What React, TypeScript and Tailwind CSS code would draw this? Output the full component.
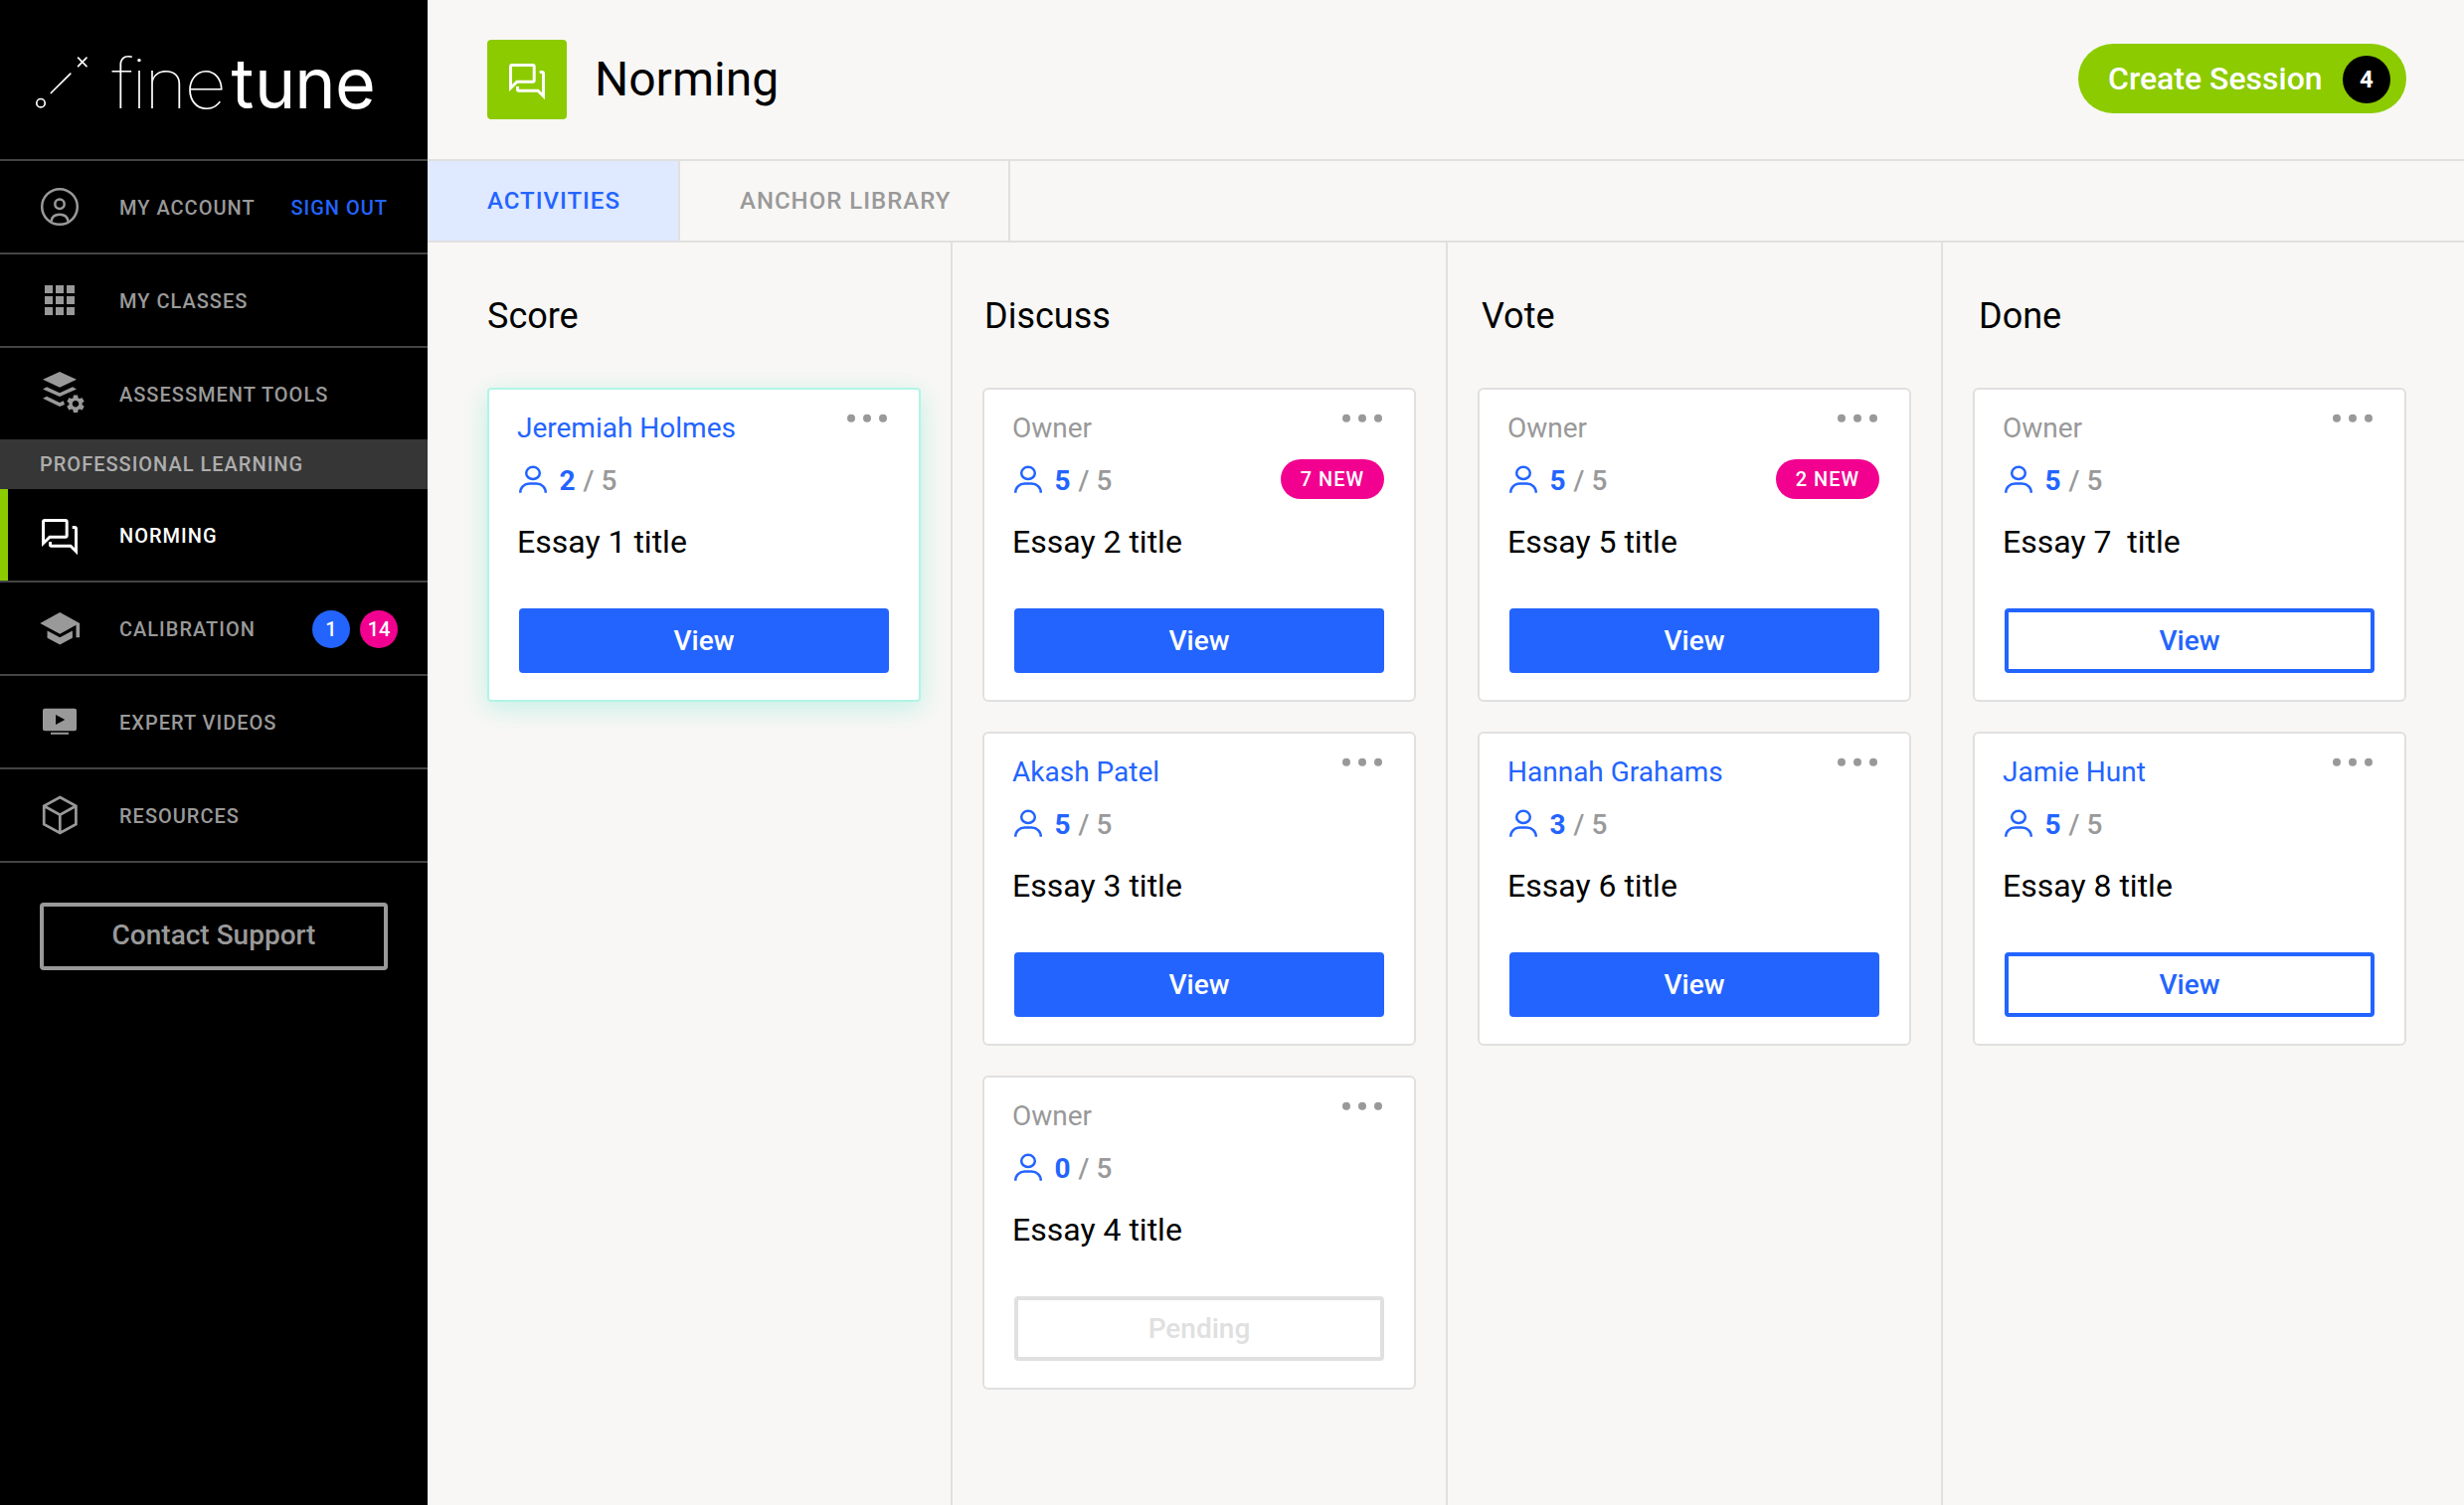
import type { ReactNode } from "react";

function ForumIcon({ className = "" }: { className?: string }) {
  return (
    <svg viewBox="0 0 36 36" fill="none" stroke="currentColor" strokeWidth={3} className={`size-9 shrink-0 overflow-visible ${className}`}>
      <path d="M1.5 24.5V3q0-1.5 1.5-1.5h20.7q1.5 0 1.5 1.5v13.7q0 1.5-1.5 1.5H8Z" />
      <path d="M8.5 23v3q0 1.2 1.2 1.2H29l5.5 5.5V10q0-1.5-1.5-1.5h-2.3" />
    </svg>
  );
}

function NavSvg({ children }: { children: ReactNode }) {
  return (
    <svg viewBox="0 0 40 40" fill="currentColor" className="size-10 shrink-0 overflow-visible">
      {children}
    </svg>
  );
}

const AccountIcon = () => (
  <NavSvg>
    <g fill="none" stroke="currentColor" strokeWidth={2.5}>
      <circle cx="20" cy="20" r="17.8" />
      <circle cx="20" cy="17.2" r="4.7" />
      <path d="M11.4 34.8c.6-4.6 3.900-7.100 8.600-7.100s8 2.500 8.600 7.100" />
    </g>
  </NavSvg>
);

const AppsIcon = () => (
  <NavSvg>
    {[5, 16, 27].map((y) => [5, 16, 27].map((x) => <rect key={`${x}-${y}`} x={x} y={y} width="8" height="8" />))}
  </NavSvg>
);

const ToolsIcon = () => (
  <NavSvg>
    <path d="M20-2 37 5.700 20 13.700 3 5.700Z" />
    <path d="M3 15.500 7 13.300 20 19.300 33 13.300 37 15.500 20 23Z" />
    <path d="M3 24.700 7 22.800 20 28.900 23.800 27.200 25 31 20 33Z" />
    <path
      transform="translate(25 19.300) scale(.917)"
      d="M19.140 12.940c.04-.3.060-.610.060-.940 0-.320-.020-.640-.070-.940l2.030-1.580c.180-.140.230-.410.120-.610l-1.920-3.320c-.120-.220-.370-.290-.590-.220l-2.390.960c-.5-.380-1.030-.7-1.620-.940l-.360-2.540c-.040-.240-.240-.410-.480-.410h-3.840c-.240 0-.430.170-.470.410l-.360 2.540c-.590.240-1.130.570-1.620.940l-2.390-.960c-.220-.080-.470 0-.590.220L2.740 8.870c-.120.210-.080.470.120.610l2.030 1.580c-.050.3-.090.630-.090.940s.020.640.070.940l-2.030 1.580c-.180.140-.230.410-.120.610l1.920 3.320c.120.220.370.290.590.220l2.390-.960c.5.380 1.030.7 1.620.940l.360 2.540c.050.240.240.410.480.410h3.840c.240 0 .440-.170.470-.410l.360-2.540c.590-.240 1.130-.560 1.620-.940l2.390.960c.220.080.470 0 .590-.220l1.920-3.320c.120-.220.070-.470-.120-.610l-2.010-1.580zM12 15.600c-1.980 0-3.600-1.620-3.600-3.600s1.620-3.600 3.600-3.600 3.600 1.620 3.600 3.600-1.620 3.600-3.600 3.600z"
    />
  </NavSvg>
);

const SchoolIcon = () => (
  <NavSvg>
    <path
      transform="translate(-1.500 -1.400) scale(1.810)"
      d="M5 13.180v4L12 21l7-3.820v-4L12 17l-7-3.820zM12 3L1 9l11 6 9-4.910V17h2V9L12 3z"
    />
  </NavSvg>
);

const VideoIcon = () => (
  <NavSvg>
    <path fillRule="evenodd" d="M5 6.700h30a2 2 0 0 1 2 2v18.600a2 2 0 0 1-2 2H5a2 2 0 0 1-2-2V8.700a2 2 0 0 1 2-2ZM16 13v10l9.300-5Z" />
    <rect x="11" y="30.800" width="18" height="2" />
  </NavSvg>
);

const CubeIcon = () => (
  <NavSvg>
    <path
      fill="none"
      stroke="currentColor"
      strokeWidth={2.700}
      d="M20.300 2 36.400 10.800V29.200L20.300 38 4.200 29.200V10.800ZM4.200 10.800 20.300 19.800 36.400 10.800M20.300 19.800V38"
    />
  </NavSvg>
);

function Logo() {
  return (
    <svg viewBox="0 0 430 160" className="block h-40 w-full text-white">
      <g fill="none" stroke="currentColor" strokeWidth={1.700}>
        <circle cx="41" cy="103.700" r="4.200" />
        <path strokeLinecap="round" d="M51.300 93.500 70.800 74.200M78.600 58.200l8.400 8.400M87 58.200l-8.400 8.400" />
      </g>
      <text y="109" fill="currentColor" transform="scale(1.060 1)" className="font-[Inter] text-[70px] font-thin" x="105.800 124.600 136.800 174.900">
        fine
      </text>
      <text y="109" fill="currentColor" className="font-[Inter] text-[70px] font-normal" x="232.400 256 296.200 337">
        tune
      </text>
    </svg>
  );
}

function NavRow({
  icon,
  label,
  children,
  active = false,
  divider = true,
}: {
  icon: ReactNode;
  label: string;
  children?: ReactNode;
  active?: boolean;
  divider?: boolean;
}) {
  return (
    <>
      <a className={`flex h-[92px] items-center ${active ? "border-l-8 border-[#8ccb00] pl-8 text-white" : "pl-10 text-[#999]"}`}>
        <span className="mr-10 flex w-10 justify-center">{icon}</span>
        <span className="pt-0.5 text-[20px] leading-6 font-medium tracking-[1px] whitespace-nowrap">{label}</span>
        {children}
      </a>
      {divider && <div className="h-0.5 bg-[#444]" />}
    </>
  );
}

function Sidebar() {
  return (
    <aside className="flex w-[430px] shrink-0 flex-col bg-black">
      <Logo />
      <div className="h-0.5 bg-[#444]" />
      <NavRow icon={<AccountIcon />} label="MY ACCOUNT">
        <span className="ml-auto pt-0.5 pr-10 text-[20px] leading-6 font-medium tracking-[1px] whitespace-nowrap text-[#2364ff]">SIGN OUT</span>
      </NavRow>
      <NavRow icon={<AppsIcon />} label="MY CLASSES" />
      <NavRow icon={<ToolsIcon />} label="ASSESSMENT TOOLS" divider={false} />
      <div className="flex h-[50px] items-center bg-[#363636] pl-10 text-[20px] leading-6 font-medium tracking-[1px] text-white/60">
        PROFESSIONAL LEARNING
      </div>
      <NavRow icon={<ForumIcon className="mt-1" />} label="NORMING" active />
      <NavRow icon={<SchoolIcon />} label="CALIBRATION">
        <span className="mt-0.5 ml-auto flex gap-2.5 pr-[30px] text-[20px] leading-6 font-medium text-white">
          <span className="flex size-[38px] items-center justify-center rounded-full bg-[#2364ff]">1</span>
          <span className="flex size-[38px] items-center justify-center rounded-full bg-[#f2008f]">14</span>
        </span>
      </NavRow>
      <NavRow icon={<VideoIcon />} label="EXPERT VIDEOS" />
      <NavRow icon={<CubeIcon />} label="RESOURCES" />
      <button className="mx-10 mt-10 flex h-[68px] items-center justify-center rounded border-4 border-[#999] pb-1 text-[28px] leading-[33px] font-medium text-[#999]">
        Contact Support
      </button>
    </aside>
  );
}

type Essay = {
  owner?: string;
  done: number;
  title: string;
  fresh?: number;
  action: "solid" | "outline" | "pending";
};

const BUTTON = {
  solid: "border-[#2364ff] bg-[#2364ff] text-white",
  outline: "border-[#2364ff] bg-white text-[#2364ff]",
  pending: "border-[#e0e0e0] bg-white text-[#e0e0e0]",
};

function Card({ essay, glow }: { essay: Essay; glow: boolean }) {
  return (
    <article
      className={`flex h-[316px] w-[436px] flex-col border-2 bg-white px-7 pt-[22px] ${
        glow ? "rounded border-[#b2f4e5] shadow-[0_6px_26px_rgba(8,215,173,0.22)]" : "rounded-md border-[#e0e0e0]"
      }`}
    >
      <div className="flex h-[33px] items-start justify-between">
        <span className={`text-[28px] leading-[33px] ${essay.owner ? "text-[#2364ff]" : "text-[#999]"}`}>{essay.owner ?? "Owner"}</span>
        <svg viewBox="0 0 40 9" className="mt-0.5 mr-1 h-[9px] w-10" fill="#999">
          <circle cx="4" cy="4.700" r="4" />
          <circle cx="20" cy="4.700" r="4" />
          <circle cx="36" cy="4.700" r="4" />
        </svg>
      </div>
      <div className="mt-[15px] flex h-10 items-start px-0.5">
        <svg viewBox="0 0 28 28" className="mt-1.5 size-7" fill="none" stroke="#2364ff" strokeWidth={2.500}>
          <ellipse cx="14" cy="7.900" rx="6.800" ry="6.100" />
          <path d="M1.250 27.700c0-5.300 4-9.200 9.300-9.200h6.900c5.300 0 9.300 3.900 9.300 9.200" />
        </svg>
        <span className="mt-[5px] ml-[12.5px] text-[28px] leading-[33px] font-medium whitespace-pre text-[#999]">
          <span className="mr-px font-bold text-[#2364ff]">{essay.done}</span>
          {" / 5"}
        </span>
        {essay.fresh && (
          <span className="ml-auto flex h-10 w-[104px] items-center justify-center rounded-full bg-[#f2008f] text-[20px] leading-6 font-medium tracking-[1px] text-white">
            {essay.fresh} NEW
          </span>
        )}
      </div>
      <h3 className="mt-6 text-[32px] leading-[38px] whitespace-pre text-black">{essay.title}</h3>
      <button
        className={`mx-0.5 mt-12 flex h-[65px] items-center justify-center rounded border-4 text-[28px] leading-[33px] font-medium ${BUTTON[essay.action]}`}
      >
        {essay.action === "pending" ? "Pending" : "View"}
      </button>
    </article>
  );
}

const COLUMNS: { name: string; box: string; heading: string; glow?: boolean; essays: Essay[] }[] = [
  {
    name: "Score",
    box: "w-[528px] pl-[60px] border-r-2",
    heading: "",
    glow: true,
    essays: [{ owner: "Jeremiah Holmes", done: 2, title: "Essay 1 title", action: "solid" }],
  },
  {
    name: "Discuss",
    box: "w-[498px] pl-[30px] border-r-2",
    heading: "pl-0.5",
    essays: [
      { done: 5, title: "Essay 2 title", fresh: 7, action: "solid" },
      { owner: "Akash Patel", done: 5, title: "Essay 3 title", action: "solid" },
      { done: 0, title: "Essay 4 title", action: "pending" },
    ],
  },
  {
    name: "Vote",
    box: "w-[498px] pl-[30px] border-r-2",
    heading: "pl-1",
    essays: [
      { done: 5, title: "Essay 5 title", fresh: 2, action: "solid" },
      { owner: "Hannah Grahams", done: 3, title: "Essay 6 title", action: "solid" },
    ],
  },
  {
    name: "Done",
    box: "flex-1 pl-[30px]",
    heading: "pl-1.5",
    essays: [
      { done: 5, title: "Essay 7  title", action: "outline" },
      { owner: "Jamie Hunt", done: 5, title: "Essay 8 title", action: "outline" },
    ],
  },
];

export default function App() {
  return (
    <div className="flex h-[1514px] w-[2478px] overflow-hidden bg-[#f8f7f5] font-[Roboto,sans-serif]">
      <Sidebar />
      <main className="flex min-w-0 flex-1 flex-col">
        <header className="flex h-[162px] shrink-0 items-start border-b-2 border-[#e0e0e0] pr-[58px] pl-[60px]">
          <div className="mt-10 flex size-20 items-center justify-center rounded bg-[#8ccb00] pt-1 text-white">
            <ForumIcon />
          </div>
          <h1 className="mt-[51px] ml-7 text-[48px] leading-[57px] text-black">Norming</h1>
          <button className="mt-11 ml-auto flex h-[70px] w-[330px] items-center rounded-full bg-[#8ccb00] pl-[30px] text-white">
            <span className="text-[32px] leading-[38px] font-medium whitespace-nowrap">Create Session</span>
            <span className="mt-0.5 mr-4 ml-auto flex size-12 items-center justify-center rounded-full bg-black text-[24px] leading-7 font-bold">4</span>
          </button>
        </header>
        <nav className="flex h-[82px] shrink-0 border-b-2 border-[#e0e0e0] text-[24px] leading-7 font-medium tracking-[1px] whitespace-nowrap">
          <a className="flex w-[254px] items-center border-r-2 border-[#e0e0e0] bg-[#dfe9ff] pl-[60px] text-[#2364ff]">ACTIVITIES</a>
          <a className="flex w-[332px] items-center border-r-2 border-[#e0e0e0] pl-[60px] text-[#999]">ANCHOR LIBRARY</a>
        </nav>
        <section className="flex flex-1">
          {COLUMNS.map((column) => (
            <div key={column.name} className={`flex shrink-0 flex-col border-[#e0e0e0] pt-[53px] ${column.box}`}>
              <h2 className={`text-[36px] leading-[42px] text-black ${column.heading}`}>{column.name}</h2>
              <div className="mt-[51px] flex flex-col gap-[30px]">
                {column.essays.map((essay) => (
                  <Card key={essay.title} essay={essay} glow={!!column.glow} />
                ))}
              </div>
            </div>
          ))}
        </section>
      </main>
    </div>
  );
}
